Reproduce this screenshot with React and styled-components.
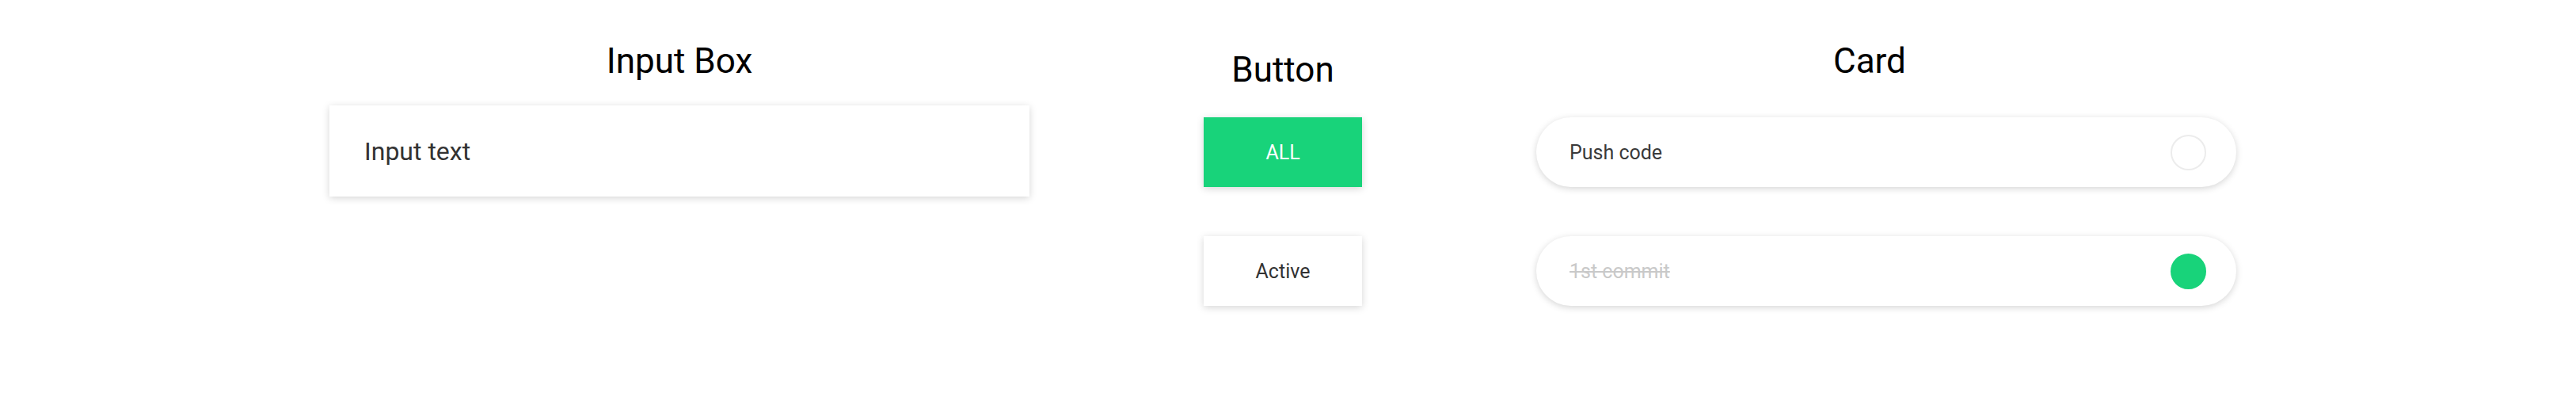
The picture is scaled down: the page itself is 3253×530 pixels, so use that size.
import styled, { createGlobalStyle } from "styled-components";

const GlobalStyle = createGlobalStyle`
  body {
    margin: 0;
    background: #fff;
    font-family: Roboto, "Liberation Sans", sans-serif;
  }
`

const GREEN = '#18d37a'

const Page = styled.div`
  display: flex;
  align-items: flex-start;
  gap: 220px;
  padding-left: 416px;
  height: 530px;
  box-sizing: border-box;
`

const Section = styled.section`
  display: flex;
  flex-direction: column;
  width: ${p => p.$width}px;
`

const Title = styled.h2`
  margin: ${p => p.$top}px 0 ${p => p.$bottom}px;
  padding-right: ${p => p.$shift || 0}px;
  font-size: 44px;
  line-height: 50px;
  font-weight: 400;
  color: #000;
  text-align: center;
`

const InputBox = styled.div`
  display: flex;
  align-items: center;
  height: 115px;
  padding-left: 44px;
  background: #fff;
  box-shadow: 0 2px 9px rgba(0, 0, 0, 0.17);
  font-size: 32px;
  color: #333;
`

const ButtonStack = styled.div`
  display: flex;
  flex-direction: column;
  gap: 62px;
`

const Button = styled.button`
  height: 88px;
  border: none;
  outline: none;
  font-family: inherit;
  font-size: 25px;
  background: ${p => p.$primary ? GREEN : '#fff'};
  color: ${p => p.$primary ? '#fff' : '#333'};
  box-shadow: 0 2px 9px rgba(0, 0, 0, 0.17);
`

const CardList = styled.div`
  display: flex;
  flex-direction: column;
  gap: 62px;
`

const Card = styled.div`
  display: flex;
  align-items: center;
  justify-content: space-between;
  height: 88px;
  padding: 0 38px 0 42px;
  border-radius: 44px;
  background: #fff;
  box-shadow: 0 2px 9px rgba(0, 0, 0, 0.17);
`

const CardText = styled.span`
  font-size: 25px;
  color: ${p => p.$done ? '#c9c9c9' : '#3a3a3a'};
  text-decoration: ${p => p.$done ? 'line-through' : 'none'};
`

const Check = styled.span`
  width: 45px;
  height: 45px;
  box-sizing: border-box;
  border-radius: 50%;
  border: 2px solid ${p => p.$done ? GREEN : '#ececec'};
  background: ${p => p.$done ? GREEN : '#fff'};
`

const todos = [
  { text: 'Push code', done: false },
  { text: '1st commit', done: true },
]

const App = () => {
  return (
    <>
      <GlobalStyle />
      <Page>
        <Section $width={884}>
          <Title $top={52} $bottom={31}>Input Box</Title>
          <InputBox>Input text</InputBox>
        </Section>

        <Section $width={200}>
          <Title $top={63} $bottom={35}>Button</Title>
          <ButtonStack>
            <Button $primary>ALL</Button>
            <Button>Active</Button>
          </ButtonStack>
        </Section>

        <Section $width={884}>
          <Title $top={52} $bottom={46} $shift={42}>Card</Title>
          <CardList>
            {todos.map(t => (
              <Card key={t.text}>
                <CardText $done={t.done}>{t.text}</CardText>
                <Check $done={t.done} />
              </Card>
            ))}
          </CardList>
        </Section>
      </Page>
    </>
  )
}

export default App
